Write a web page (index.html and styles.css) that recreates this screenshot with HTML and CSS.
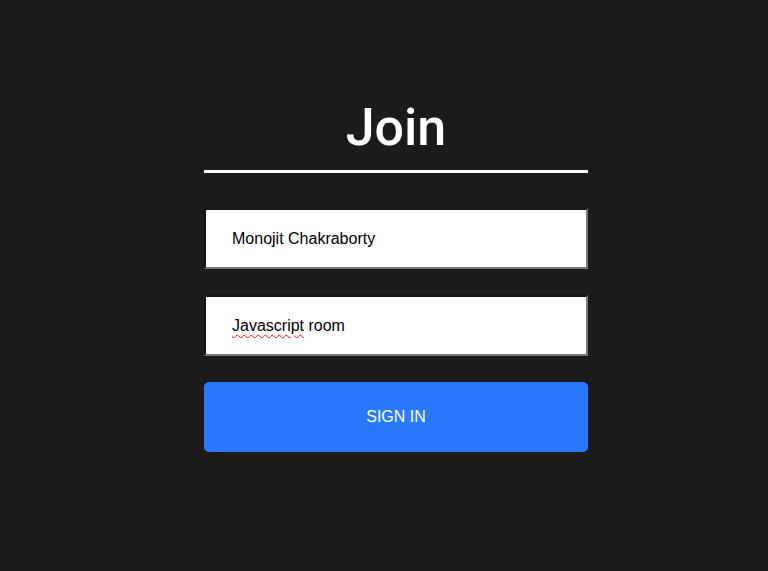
FILE: index.html
```html
<!DOCTYPE html>
<html>
<head>
<meta charset="utf-8">
<link rel="stylesheet" href="styles.css">
</head>
<body>
<main class="page">
  <form class="join">
    <h1 class="title">Join</h1>
    <div class="field"><span class="value">Monojit Chakraborty</span></div>
    <div class="field"><span class="value"><span class="misspelled">Javascript</span> room</span></div>
    <button type="button" class="btn">SIGN IN</button>
  </form>
</main>
</body>
</html>
```
FILE: styles.css
```css
html, body {
  margin: 0;
  padding: 0;
  background: #1b1b1d;
  height: 100%;
}
.page {
  display: flex;
  justify-content: center;
  padding-left: 24px;
  padding-top: 97px;
  box-sizing: border-box;
}
.join {
  width: 384px;
  display: flex;
  flex-direction: column;
}
.title {
  margin: 0;
  font-family: Roboto, "Liberation Sans", sans-serif;
  font-weight: 500;
  font-size: 52px;
  line-height: 62px;
  color: #ffffff;
  text-align: center;
  padding-bottom: 11px;
  border-bottom: 3px solid #ffffff;
  margin-bottom: 35px;
}
.field {
  height: 61px;
  box-sizing: border-box;
  border-style: solid;
  border-width: 2px;
  border-color: #141414 #767676 #767676 #141414;
  background: #ffffff;
  padding: 0 26px;
  display: flex;
  align-items: center;
  font-family: "Liberation Sans", Arial, sans-serif;
  font-size: 16px;
  color: #000000;
  margin-bottom: 26px;
}
.misspelled {
  text-decoration: underline wavy #e01818;
  text-decoration-thickness: 1px;
  text-underline-offset: 3px;
}
.btn {
  height: 70px;
  border: none;
  border-radius: 5px;
  background: #2979ff;
  color: #ffffff;
  font-family: "Liberation Sans", Arial, sans-serif;
  font-size: 16px;
  padding: 0;
}
```
